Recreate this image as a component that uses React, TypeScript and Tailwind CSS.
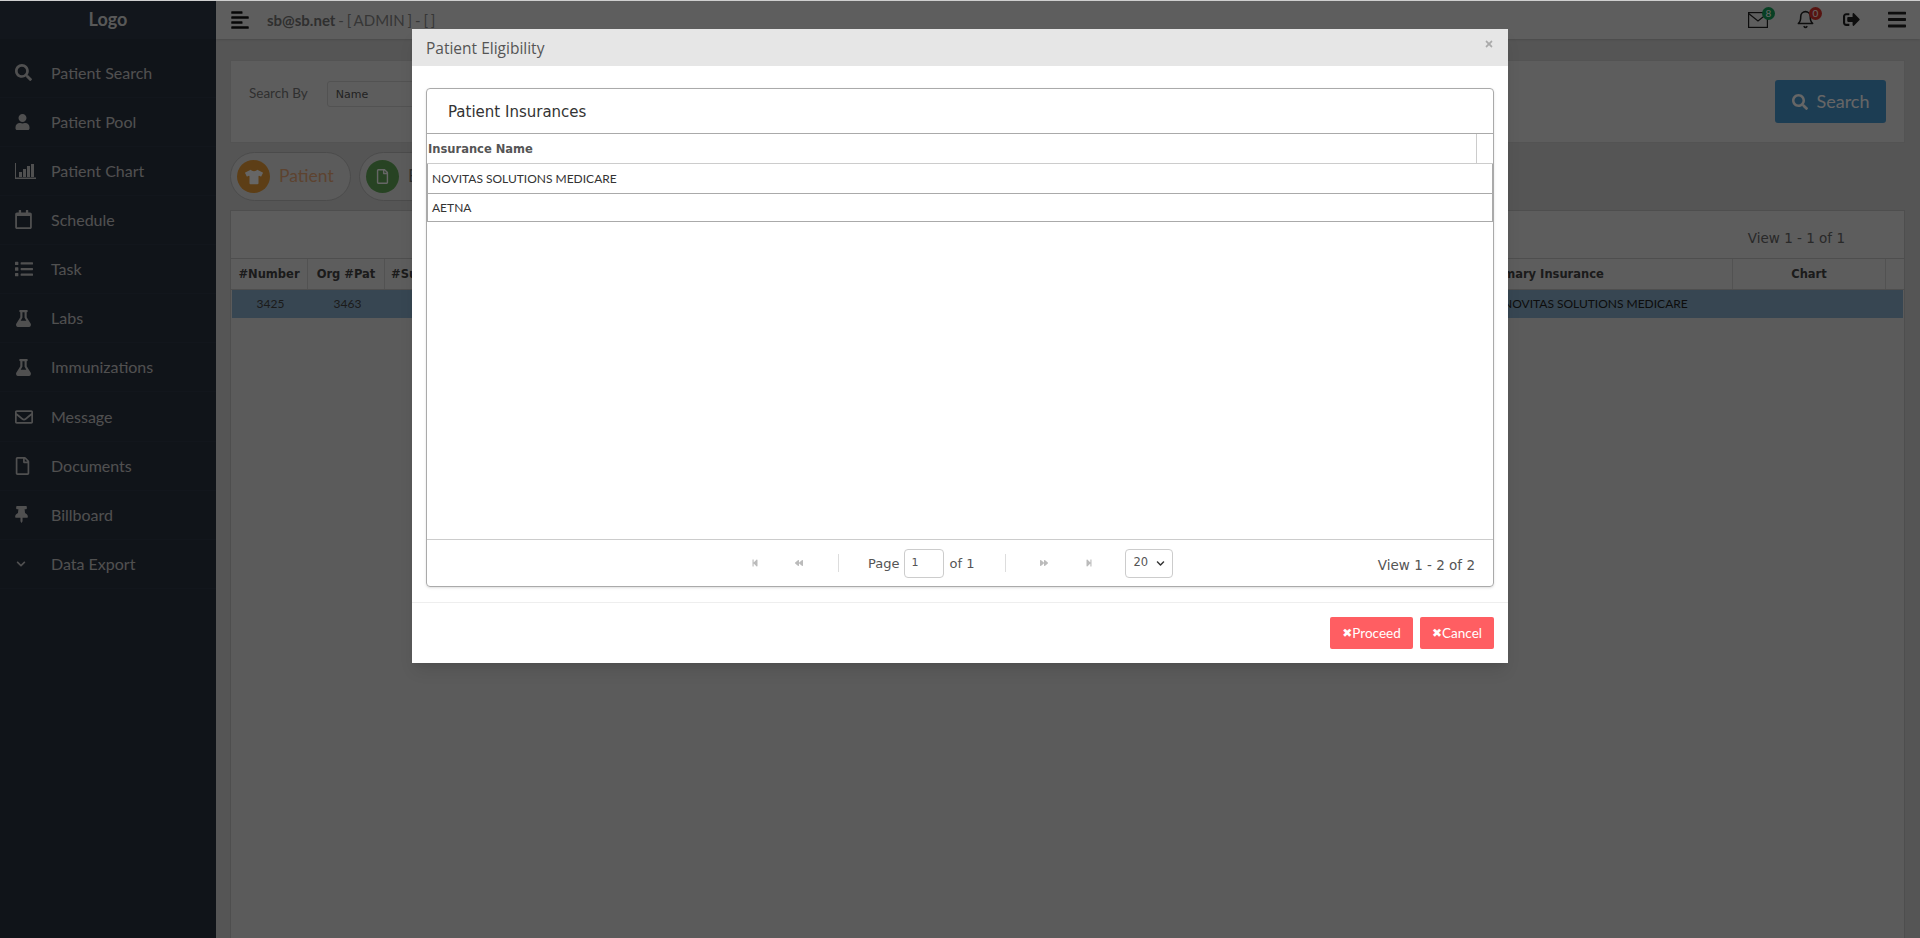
import React from "react";
import { FaSearch, FaUser, FaRegCalendar, FaList, FaFlask, FaRegEnvelope, FaRegFile, FaThumbtack, FaChevronDown, FaTimes, FaBars, FaSignOutAlt, FaStepBackward, FaBackward, FaForward, FaStepForward, FaTshirt, FaAlignLeft } from "react-icons/fa";
import { FiBell } from "react-icons/fi";

function ChartIcon() {
  return (
    <svg viewBox="0 0 21 16" className="w-[21px] h-[16px]" fill="currentColor">
      <path d="M0 0h1v14.5h20.5V16H0z" />
      <rect x="4" y="9" width="3" height="5" />
      <rect x="8" y="6" width="3" height="8" />
      <rect x="12" y="3" width="3" height="11" />
      <rect x="16" y="1" width="3" height="13" />
    </svg>
  );
}

function MailIcon() {
  return (
    <svg viewBox="0 0 20 16" className="w-[20px] h-[16px]" fill="none" stroke="currentColor" strokeWidth="1.2">
      <rect x="0.6" y="0.6" width="18.8" height="14.8" />
      <path d="M0.6 1.5 10 9l9.4-7.5" />
    </svg>
  );
}

const nav: [React.ReactNode, string][] = [
  [<FaSearch className="w-[17px] h-[17px]" />, "Patient Search"],
  [<FaUser className="w-[15px] h-[16px]" />, "Patient Pool"],
  [<ChartIcon />, "Patient Chart"],
  [<FaRegCalendar className="w-[17px] h-[19px]" />, "Schedule"],
  [<FaList className="w-[18px] h-[18px]" />, "Task"],
  [<FaFlask className="w-[17px] h-[17px]" />, "Labs"],
  [<FaFlask className="w-[17px] h-[17px]" />, "Immunizations"],
  [<FaRegEnvelope className="w-[18px] h-[18px]" />, "Message"],
  [<FaRegFile className="w-[15px] h-[18px]" />, "Documents"],
  [<FaThumbtack className="w-[13px] h-[17px]" />, "Billboard"],
  [<FaChevronDown className="w-[10px] h-[10px] ml-[1px]" />, "Data Export"],
];

const cols: [string, string, string][] = [
  ["#Number", "w-[77px]", "justify-center"],
  ["Org #Pat", "w-[77px]", "justify-center"],
  ["#Sub", "w-[70px]", "justify-start pl-[6px]"],
  ["Patient", "flex-1", "justify-center"],
  ["Primary Insurance", "w-[386px]", "justify-center pl-[10px]"],
  ["Chart", "w-[153px]", "justify-center"],
];

export default function App() {
  return (
    <div className="relative h-[938px] w-[1920px] overflow-hidden bg-[#d5d5d5] font-['Lato','Liberation_Sans',sans-serif]">
      <div className="flex h-full">
        <aside className="w-[216px] shrink-0 bg-[#283240] text-[#c8c8c8]">
          <div className="flex h-[39px] items-center justify-center bg-[#2d3948] text-[18px] font-bold text-[#dcdcdc]">Logo</div>
          <nav className="pt-[9.5px]">
            {nav.map(([icon, label]) => (
              <div key={label} className="flex h-[49.15px] items-center border-b border-[#2e3846] pl-[15px] text-[16px]">
                <span className="flex w-[36px] shrink-0 items-center">{icon}</span>
                {label}
              </div>
            ))}
          </nav>
        </aside>
        <main className="min-w-0 flex-1">
          <header className="flex h-[39px] items-center bg-[#ececec] pl-[14px] pr-[14px] shadow">
            <FaAlignLeft className="h-[20px] w-[20px] text-[#111]" />
            <span className="ml-[17px] pt-[2px] text-[15px] text-[#888] [word-spacing:-1px]"><span className="font-bold text-[#777]">sb@sb.net</span> - [ ADMIN ] - [ ]</span>
            <div className="ml-auto flex items-center gap-[28px] text-[#222]">
              <span className="relative block h-[16px] w-[20px]"><MailIcon /><span className="absolute -right-[7px] -top-[5px] flex h-[13px] w-[13px] items-center justify-center rounded-full bg-[#14a05a] text-[10px] text-white">8</span></span>
              <span className="relative block h-[19px] w-[19px]"><FiBell className="h-[19px] w-[19px]" /><span className="absolute -right-[7px] -top-[3px] flex h-[13px] w-[13px] items-center justify-center rounded-full bg-[#d9342b] text-[10px] text-white">0</span></span>
              <FaSignOutAlt className="h-[17px] w-[17px]" />
              <FaBars className="h-[21px] w-[18px]" />
            </div>
          </header>
          <div className="pl-[14px] pr-[15px] pt-[21px]">
            <section className="flex h-[83px] items-start border border-[#d0d0d0] bg-[#e8e8e8] pl-[18px] pr-[18px]">
              <span className="mt-[22px] text-[13.5px] text-[#777]">Search By</span>
              <div className="ml-[19px] mt-[20px] flex h-[26px] w-[300px] items-center rounded-[3px] border border-[#ccc] pl-[8px] pt-[2px] font-['DejaVu_Sans',sans-serif] text-[11px] text-[#555]">Name</div>
              <button className="ml-auto mt-[19px] flex h-[43px] w-[111px] items-center justify-center gap-[9px] rounded-[3px] bg-[#4798d0] text-[18px] text-white">
                <FaSearch className="h-[16px] w-[16px]" /> Search
              </button>
            </section>
            <div className="mt-[9px] flex h-[49px] gap-[8px]">
              <div className="flex w-[121px] items-center rounded-full border border-[#bbb] bg-[#e4e4e4] pl-[6px] text-[17.5px] text-[#e8a878]">
                <span className="flex h-[33px] w-[33px] items-center justify-center rounded-full bg-[#e89c38] text-white"><FaTshirt className="h-[18px] w-[18px]" /></span>
                <span className="ml-[9px]">Patient</span>
              </div>
              <div className="flex w-[160px] items-center rounded-full border border-[#bbb] bg-[#e4e4e4] pl-[6px] text-[17.5px] text-[#777]">
                <span className="flex h-[33px] w-[33px] items-center justify-center rounded-full bg-[#62a858] text-white"><FaRegFile className="h-[15px] w-[13px]" /></span>
                <span className="ml-[9px]">E</span>
              </div>
            </div>
            <section className="mt-[9px] h-[740px] border border-[#c4c4c4] bg-[#e4e4e4]">
              <div className="flex h-[47px] items-start justify-end bg-[#e8e8e8] pr-[59px] pt-[17px] font-['DejaVu_Sans',sans-serif] text-[13.5px] text-[#666]">View 1 - 1 of 1</div>
              <div className="flex h-[32px] items-stretch border-y border-[#c4c4c4] bg-[#e8e8e8] pr-[18px]">
                {cols.map(([c, w, j]) => (
                  <div key={c} className={`${w} ${j} flex items-center border-r border-[#ccc] pt-[2px] font-['DejaVu_Sans',sans-serif] text-[11.5px] font-bold text-[#444]`}>{c}</div>
                ))}
              </div>
              <div className="mx-[1px] flex h-[28px] items-center bg-[#8ab0cc] text-[12px] text-[#222]">
                <span className="w-[77px] text-center text-[#444]">3425</span>
                <span className="w-[77px] text-center text-[#444]">3463</span>
                <span className="ml-auto w-[403px] pl-[3px]">NOVITAS SOLUTIONS MEDICARE</span>
              </div>
            </section>
          </div>
        </main>
      </div>

      <div className="absolute inset-0 bg-black/60" />
      <div className="absolute inset-x-0 top-0 h-px bg-[#cfcfcf]" />

      <div className="absolute left-[412px] top-[29px] w-[1096px] bg-white shadow-lg">
        <div className="flex h-[37px] items-center justify-between bg-[#e6e6e6] px-[14px] pt-[2px] font-['Open_Sans',sans-serif] text-[15.5px] text-[#555]">
          <span>Patient Eligibility</span>
          <FaTimes className="mb-[10px] h-[10px] w-[10px] text-[#aaa]" />
        </div>
        <div className="px-[14px] pb-[15px] pt-[22px]">
          <div className="rounded-[4px] border border-[#aaa] shadow-sm">
            <div className="flex h-[45px] items-center border-b border-[#aaa] pl-[21px] pt-[2px] font-['DejaVu_Sans',sans-serif] text-[15px] text-[#333]">Patient Insurances</div>
            <div className="flex h-[30px] border-b border-[#ccc]">
              <div className="flex flex-1 items-center border-r border-[#ccc] pl-[1px] pt-[3px] font-['DejaVu_Sans',sans-serif] text-[11.5px] font-bold text-[#555]">Insurance Name</div>
              <div className="w-[16px]" />
            </div>
            <div className="h-[375px] text-[12px] text-[#333]">
              <div className="flex h-[30px] items-center border-x border-b border-[#aaa] pl-[4px]">NOVITAS SOLUTIONS MEDICARE</div>
              <div className="flex h-[28px] items-center border-x border-b border-[#aaa] pl-[4px]">AETNA</div>
            </div>
            <div className="relative flex h-[47px] items-center border-t border-[#ccc] font-['DejaVu_Sans',sans-serif] text-[13px] text-[#555]">
              <div className="ml-[324px] flex items-center text-[#bbb]">
                <FaStepBackward className="h-[8px] w-[8px]" />
                <FaBackward className="ml-[36px] h-[8px] w-[8px]" />
                <span className="ml-[35px] h-[18px] border-l border-[#ddd]" />
              </div>
              <span className="ml-[29px] pt-[2px]">Page</span>
              <span className="ml-[5px] flex h-[29px] w-[40px] items-center rounded-[4px] border border-[#ccc] pl-[6px] text-[11px]">1</span>
              <span className="ml-[5px] pt-[2px]">of 1</span>
              <div className="ml-[31px] flex items-center text-[#bbb]">
                <span className="h-[18px] border-l border-[#ddd]" />
                <FaForward className="ml-[34px] h-[8px] w-[8px]" />
                <FaStepForward className="ml-[37px] h-[8px] w-[8px]" />
              </div>
              <span className="ml-[32px] flex h-[29px] w-[48px] items-center justify-between rounded-[4px] border border-[#ccc] px-[7px] text-[11.5px]">20 <FaChevronDown className="h-[9px] w-[9px] text-[#333]" /></span>
              <span className="absolute right-[18px] top-[15px] text-[13.5px]">View 1 - 2 of 2</span>
            </div>
          </div>
        </div>
        <div className="flex h-[61px] items-start justify-end gap-[7px] border-t border-[#eee] pr-[14px] pt-[14px] text-[13.5px] text-white">
          <button className="flex h-[32px] w-[83px] items-center justify-center rounded-[2px] bg-[#ff5e62]"><span className="font-['DejaVu_Sans',sans-serif] text-[12px]">✖</span>Proceed</button>
          <button className="flex h-[32px] w-[74px] items-center justify-center rounded-[2px] bg-[#ff5e62]"><span className="font-['DejaVu_Sans',sans-serif] text-[12px]">✖</span>Cancel</button>
        </div>
      </div>
    </div>
  );
}
